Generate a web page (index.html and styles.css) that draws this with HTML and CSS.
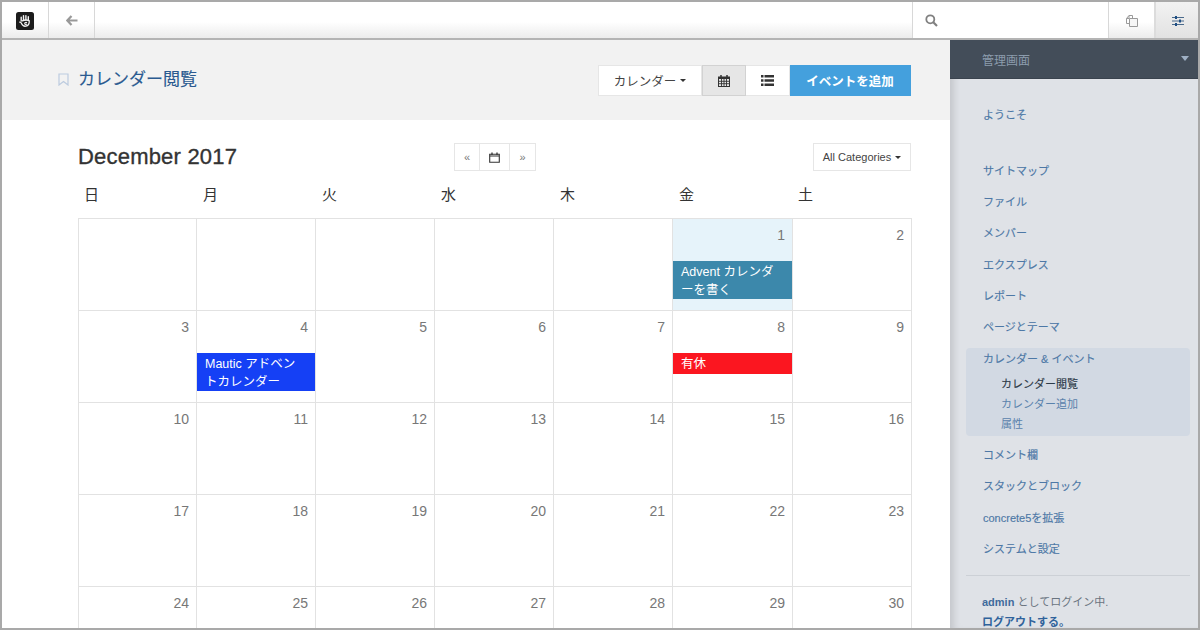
FILE: index.html
```html
<!DOCTYPE html>
<html lang="ja">
<head>
<meta charset="utf-8">
<title>カレンダー閲覧</title>
<link rel="stylesheet" href="styles.css">
</head>
<body>
<div class="frame">
  <header class="toolbar">
    <div class="tb-cell tb-logo">
      <svg width="18" height="18" viewBox="0 0 18 18"><rect width="18" height="18" rx="2.5" fill="#1c1c1c"/><path d="M5.200 9V5.200M7.500 8V3.600M9.900 8V3.600M12.300 8.500V4.800" stroke="#f4f4f4" stroke-width="1.400" stroke-linecap="round" fill="none"/><path d="M3.800 10.200c1-.3 1.300.5 1.700 1.300.8 1.900 2.400 2.900 4.200 2.700 1.700-.2 3-1.300 3.400-3 .2-.9.200-1.700 0-2.700-2-.6-5.200-.4-6.800.3" stroke="#f4f4f4" stroke-width="1.300" fill="none" stroke-linecap="round"/><path d="M11 10.700c-.9-.6-2.300-.3-2.300.7s1.400 1.300 2.300.7" stroke="#f4f4f4" stroke-width="1.100" fill="none"/></svg>
    </div>
    <div class="tb-cell tb-back">
      <svg width="12" height="11" viewBox="0 0 12 11"><path d="M5.500 1 1.300 5.500 5.500 10M2 5.500h9.500" stroke="#999" stroke-width="2.200" fill="none"/></svg>
    </div>
    <div class="tb-spacer"></div>
    <div class="tb-search">
      <svg width="13" height="13" viewBox="0 0 13 13"><circle cx="5.300" cy="5.300" r="4" stroke="#808080" stroke-width="1.800" fill="none"/><path d="m8.300 8.300 3.700 3.700" stroke="#808080" stroke-width="2.200"/></svg>
    </div>
    <div class="tb-cell tb-pages">
      <svg width="12" height="12" viewBox="0 0 12 12"><path d="M3.500 8.500H.5V3.500L3 .5h3.500v3" stroke="#9a9a9a" fill="none"/><path d="M3 .5v3H.5" stroke="#9a9a9a" fill="none"/><path d="M3.500 3.500h8v8h-8z" stroke="#9a9a9a" fill="#f6f6f6"/></svg>
    </div>
    <div class="tb-cell tb-settings">
      <svg width="12" height="10" viewBox="0 0 12 10"><path d="M0 1.500h12M0 5h12M0 8.500h12" stroke="#4a6a8c" stroke-width="1"/><path d="M3 0h2v3H3zM7 3.500h2v3H7zM3 7h2v3H3z" fill="#1f4f85"/></svg>
    </div>
  </header>
  <div class="body">
    <main class="main">
      <div class="page-head">
        <h1 class="page-title">
          <svg class="bookmark" width="11" height="13" viewBox="0 0 11 13"><path d="M1 1h9v11L5.500 8.500 1 12z" fill="none" stroke="#bccbdf" stroke-width="1.200"/></svg>
          カレンダー閲覧
        </h1>
        <div class="head-btns">
          <div class="hb hb-drop">カレンダー<span class="caret"></span></div>
          <div class="hb hb-icon hb-active">
            <svg width="12" height="13" viewBox="0 0 12 13"><path d="M0 2.500h12V13H0z" fill="#333"/><path d="M1 5h10v7H1z" fill="#e6e6e6"/><path d="M3 1v3M9 1v3" stroke="#333" stroke-width="1.500"/><path d="M3.500 5v7M6 5v7M8.500 5v7M1 7.300h10M1 9.700h10" stroke="#333" stroke-width=".9"/></svg>
          </div>
          <div class="hb hb-icon">
            <svg width="13" height="11" viewBox="0 0 13 11"><path d="M0 0h2.500v2.500H0zM3.500 0H13v2.500H3.500zM0 4.200h2.500v2.500H0zM3.500 4.200H13v2.500H3.500zM0 8.400h2.500v2.500H0zM3.500 8.400H13v2.500H3.500z" fill="#333"/></svg>
          </div>
          <div class="hb hb-primary">イベントを追加</div>
        </div>
      </div>
      <section class="cal">
        <div class="cal-top">
          <h2 class="month">December 2017</h2>
          <div class="pager">
            <div class="pg pg-a">«</div>
            <div class="pg pg-b">
              <svg width="11" height="11" viewBox="0 0 11 11"><path d="M.7 2.200h9.600v8H.7zM.7 4h9.600" stroke="#333" stroke-width="1.100" fill="none"/><path d="M3 .5v2.500M8 .5v2.500" stroke="#333" stroke-width="1.300"/></svg>
            </div>
            <div class="pg pg-c">»</div>
          </div>
          <div class="cat-btn">All Categories<span class="caret"></span></div>
        </div>
        <div class="weekdays"><div>日</div><div>月</div><div>火</div><div>水</div><div>木</div><div>金</div><div>土</div></div>
        <div class="grid">
          <div class="c"></div><div class="c"></div><div class="c"></div><div class="c"></div><div class="c"></div>
          <div class="c today"><div class="n">1</div><div class="ev ev-teal">Advent カレンダーを書く</div></div>
          <div class="c"><div class="n">2</div></div>
          <div class="c"><div class="n">3</div></div>
          <div class="c"><div class="n">4</div><div class="ev ev-blue">Mautic アドベントカレンダー</div></div>
          <div class="c"><div class="n">5</div></div>
          <div class="c"><div class="n">6</div></div>
          <div class="c"><div class="n">7</div></div>
          <div class="c"><div class="n">8</div><div class="ev ev-red">有休</div></div>
          <div class="c"><div class="n">9</div></div>
          <div class="c"><div class="n">10</div></div>
          <div class="c"><div class="n">11</div></div>
          <div class="c"><div class="n">12</div></div>
          <div class="c"><div class="n">13</div></div>
          <div class="c"><div class="n">14</div></div>
          <div class="c"><div class="n">15</div></div>
          <div class="c"><div class="n">16</div></div>
          <div class="c"><div class="n">17</div></div>
          <div class="c"><div class="n">18</div></div>
          <div class="c"><div class="n">19</div></div>
          <div class="c"><div class="n">20</div></div>
          <div class="c"><div class="n">21</div></div>
          <div class="c"><div class="n">22</div></div>
          <div class="c"><div class="n">23</div></div>
          <div class="c"><div class="n">24</div></div>
          <div class="c"><div class="n">25</div></div>
          <div class="c"><div class="n">26</div></div>
          <div class="c"><div class="n">27</div></div>
          <div class="c"><div class="n">28</div></div>
          <div class="c"><div class="n">29</div></div>
          <div class="c"><div class="n">30</div></div>
        </div>
      </section>
    </main>
    <aside class="side">
      <div class="side-head"><span>管理画面</span><span class="side-caret"></span></div>
      <nav class="side-nav">
        <a class="si si-first">ようこそ</a>
        <a class="si si-gap">サイトマップ</a>
        <a class="si">ファイル</a>
        <a class="si">メンバー</a>
        <a class="si">エクスプレス</a>
        <a class="si">レポート</a>
        <a class="si">ページとテーマ</a>
        <div class="si-group">
          <a class="si">カレンダー &amp; イベント</a>
          <div class="sub">
            <a class="sub-item sub-on">カレンダー閲覧</a>
            <a class="sub-item">カレンダー追加</a>
            <a class="sub-item">属性</a>
          </div>
        </div>
        <a class="si">コメント欄</a>
        <a class="si">スタックとブロック</a>
        <a class="si">concrete5を拡張</a>
        <a class="si">システムと設定</a>
      </nav>
      <div class="login">
        <div><b>admin</b> としてログイン中.</div>
        <div class="logout">ログアウトする。</div>
      </div>
    </aside>
  </div>
</div>
</body>
</html>
```
FILE: styles.css
```css
* { box-sizing: border-box; }
html, body { margin: 0; padding: 0; }
body { width: 1200px; height: 630px; overflow: hidden; background: #fff; font-family: "Liberation Sans", "Noto Sans CJK JP", sans-serif; color: #333; }
.frame { width: 1200px; height: 630px; border: 2px solid #a9a9a9; display: flex; flex-direction: column; overflow: hidden; }
.toolbar { height: 38px; flex: none; display: flex; background: linear-gradient(#fff 55%, #ececec); border-bottom: 2px solid #b4b4b4; }
.tb-cell { display: flex; align-items: center; justify-content: center; border-right: 1px solid #d8d8d8; }
.tb-logo { width: 47px; padding: 2px 1px 0 0; }
.tb-back { width: 46px; padding-top: 1px; }
.tb-spacer { flex: 1; }
.tb-search { width: 196px; background: #fff; border-left: 1px solid #d8d8d8; padding: 1px 0 0 12px; display: flex; align-items: center; }
.tb-pages { width: 46px; border-left: 1px solid #d8d8d8; border-right: 0; padding-top: 1px; }
.tb-settings { width: 44px; border-left: 2px solid #dcdcdc; border-right: 0; padding: 2px 0 0 2px; background: linear-gradient(#f2f2f2, #e2e2e2); }
.body { flex: 1; display: flex; min-height: 0; }
.main { width: 948px; flex: none; }
.page-head { height: 80px; background: #f2f2f2; display: flex; justify-content: space-between; padding: 25px 39px 0 56px; }
.page-title { margin: 0; font-size: 17px; font-weight: 400; line-height: 28px; color: #2a5a90; height: 30px; display: flex; align-items: center; gap: 9px; -webkit-text-stroke: .15px #2a5a90; }
.bookmark { flex: none; margin-top: -1px; }
.head-btns { display: flex; height: 31px; }
.hb { display: flex; align-items: center; justify-content: center; height: 31px; background: #fff; border: 1px solid #e6e6e6; border-left: 0; font-size: 12.500px; color: #444; }
.hb-drop { width: 104px; border-left: 1px solid #e6e6e6; }
.hb-icon { width: 44px; }
.hb-active { background: #e6e6e6; border: 1px solid #d2d2d2; }
.hb-primary { width: 121px; background: #44a0dd; border-color: #44a0dd; color: #fff; font-weight: 700; }
.caret { display: inline-block; margin-left: 4px; border-top: 3px solid #333; border-left: 3px solid transparent; border-right: 3px solid transparent; }
.cal { padding: 23px 39px 0 76px; }
.cal-top { height: 28px; position: relative; display: flex; justify-content: space-between; align-items: flex-start; }
.month { margin: 0; font-size: 22px; font-weight: 400; line-height: 28px; color: #333; letter-spacing: .2px; -webkit-text-stroke: .35px #333; }
.pager { position: absolute; left: 376px; top: 0; display: flex; height: 28px; }
.pg { display: flex; align-items: center; justify-content: center; border: 1px solid #e6e6e6; border-left: 0; font-size: 11px; color: #777; height: 28px; }
.pg-a { width: 26px; border-left: 1px solid #e6e6e6; }
.pg-b { width: 30px; }
.pg-c { width: 26px; }
.cat-btn { width: 98px; height: 28px; border: 1px solid #e6e6e6; font-size: 11px; color: #444; display: flex; align-items: center; justify-content: center; white-space: nowrap; }
.weekdays { display: grid; grid-template-columns: repeat(7, 119px); height: 47px; font-size: 15px; color: #333; line-height: 20px; padding-top: 14px; }
.weekdays > div { padding-left: 6px; }
.grid { display: grid; grid-template-columns: 118px 119px 119px 119px 119px 120px 119px; grid-auto-rows: 92px; width: 834px; border-top: 1px solid #e2e2e2; border-left: 1px solid #e2e2e2; }
.c { border-right: 1px solid #e2e2e2; border-bottom: 1px solid #e2e2e2; padding-top: 6px; min-width: 0; }
.today { background: #e6f3fa; }
.n { font-size: 14px; line-height: 20px; text-align: right; color: #777; padding-right: 7px; height: 20px; }
.ev { margin-top: 16px; padding: 3px 10px 0 8px; font-size: 12.500px; line-height: 17.500px; color: #fff; }
.ev-teal { background: #3c88ab; }
.ev-blue { background: #1540f5; }
.ev-red { background: #fb1620; }
.side { flex: 1; background: #dfe2e7; position: relative; box-shadow: inset 8px 0 7px -4px rgba(0,0,0,.12); overflow: hidden; }
.side-head { height: 39px; background: #434d59; color: #8c9cad; font-size: 12px; padding: 0 9px 0 32px; display: flex; align-items: center; justify-content: space-between; border-bottom: 1px solid #3a434e; }
.side-caret { border-top: 5px solid #9fb0c4; border-left: 4.500px solid transparent; border-right: 4.500px solid transparent; margin-bottom: 2px; }
.side-nav { padding: 24.500px 8px 0 16px; }
.si { display: block; height: 31.400px; line-height: 22px; padding-left: 17px; font-size: 11px; color: #4d78a6; white-space: nowrap; -webkit-text-stroke: .15px #4d78a6; }
.si-first { height: 56px; }
.si-group { background: #d2d9e3; border-radius: 4px; height: 88px; margin: 0 0 8px; }
.si-group .si { height: 26px; line-height: 23px; }
.sub { padding-left: 35px; }
.sub-item { display: block; height: 20px; line-height: 20px; font-size: 11px; color: #5a82ac; white-space: nowrap; }
.sub-on { color: #2d3a48; -webkit-text-stroke: .15px #2d3a48; }
.login { margin: 6px 8px 0 16px; border-top: 1px solid #ccd0d6; padding: 16px 0 0 16px; font-size: 11px; line-height: 20px; color: #6a7480; }
.login b { color: #3f6b9c; }
.logout { color: #2f629b; font-weight: 700; }
```
